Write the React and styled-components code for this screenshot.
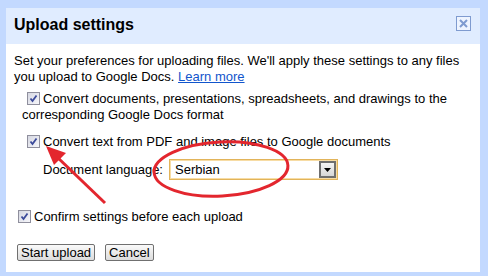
import styled, { createGlobalStyle } from "styled-components";

const Global = createGlobalStyle`
  html, body {
    margin: 0;
    padding: 0;
    background: #c3d9ff;
  }
  body {
    font-family: "Liberation Sans", Arial, sans-serif;
    font-size: 13px;
    color: #000;
  }
`;

const Page = styled.div`
  position: relative;
  width: 488px;
  height: 276px;
  padding: 8px 8px 4px 6px;
  box-sizing: border-box;
`;

const Dialog = styled.div`
  width: 474px;
  height: 264px;
  background: #fff;
  display: flex;
  flex-direction: column;
`;

const Header = styled.div`
  height: 36px;
  box-sizing: border-box;
  background: #e0ecff;
  padding: 8px 9px 0 8px;
  display: flex;
  justify-content: space-between;
  align-items: flex-start;
`;

const Title = styled.h1`
  margin: 0;
  font-size: 16px;
  line-height: 18px;
  font-weight: bold;
`;

const Close = styled.button`
  width: 15px;
  height: 15px;
  padding: 0;
  margin: 0;
  border: 1px solid #7f9bd0;
  background: #eef4ff;
  display: flex;
  align-items: center;
  justify-content: center;
  box-sizing: border-box;
`;

const Body = styled.div`
  padding: 9px 8px 0 8px;
  display: flex;
  flex-direction: column;
  line-height: 16px;
`;

const Intro = styled.p`
  margin: 0;
`;

const Link = styled.a`
  color: #1155cc;
  text-decoration: underline;
`;

const Option = styled.div`
  margin: ${(p) => p.$top}px 0 0 ${(p) => p.$indent}px;
`;

const Box = styled.span`
  display: inline-block;
  vertical-align: -2px;
  width: 13px;
  height: 13px;
  box-sizing: border-box;
  border: 1px solid #8f8f9d;
  background: linear-gradient(135deg, #d6d8e2, #f6f6fa);
  margin: 0 3px 0 ${(p) => p.$left || 0}px;
  svg {
    display: block;
  }
`;

const LangRow = styled.div`
  margin: 9px 0 0 29px;
  display: flex;
  align-items: center;
  gap: 6px;
`;

const Select = styled.div`
  width: 169px;
  height: 21px;
  box-sizing: border-box;
  border: 1px solid #e2b45a;
  box-shadow: inset 0 0 0 1px #f7dca4;
  display: flex;
  align-items: center;
  justify-content: space-between;
  padding: 0 1px 0 5px;
`;

const Caret = styled.span`
  width: 17px;
  height: 17px;
  box-sizing: border-box;
  border: 2px solid #6f6f6f;
  background: linear-gradient(#f4f4f4, #d6d6d6);
  display: flex;
  align-items: center;
  justify-content: center;
`;

const Buttons = styled.div`
  margin: 19px 0 0 3px;
  display: flex;
  gap: 10px;
`;

const Button = styled.button`
  font-family: "Liberation Sans", Arial, sans-serif;
  font-size: 13px;
  line-height: 15px;
  height: 17px;
  padding: 0 3px;
  border: 1px solid #707070;
  border-radius: 2px;
  background: linear-gradient(#fafafa, #dcdcdc);
  color: #000;
`;

const Overlay = styled.svg`
  position: absolute;
  left: 0;
  top: 0;
  pointer-events: none;
`;

function Check({ left }) {
  return (
    <Box $left={left}>
      <svg width="11" height="11" viewBox="0 0 11 11">
        <path d="M2.5 5.5 L4.5 8 L8.5 2.5" fill="none" stroke="#3b4a9a" strokeWidth="1.8" />
      </svg>
    </Box>
  );
}

export default function App() {
  return (
    <Page>
      <Global />
      <Dialog>
        <Header>
          <Title>Upload settings</Title>
          <Close aria-label="Close">
            <svg width="11" height="11" viewBox="0 0 11 11">
              <path d="M2 2 L9 9 M9 2 L2 9" stroke="#7f9bd0" strokeWidth="2" />
            </svg>
          </Close>
        </Header>
        <Body>
          <Intro>
            Set your preferences for uploading files. We'll apply these settings to any files
            you upload to Google Docs. <Link href="#">Learn more</Link>
          </Intro>
          <Option $top={6} $indent={8}>
            <Check left={5} />
            Convert documents, presentations, spreadsheets, and drawings to the
            corresponding Google Docs format
          </Option>
          <Option $top={11} $indent={8}>
            <Check left={5} />
            Convert text from PDF and image files to Google documents
          </Option>
          <LangRow>
            <span>Document language:</span>
            <Select>
              <span>Serbian</span>
              <Caret>
                <svg width="7" height="4" viewBox="0 0 7 4">
                  <path d="M0 0 H7 L3.5 4 Z" fill="#000" />
                </svg>
              </Caret>
            </Select>
          </LangRow>
          <Option $top={29} $indent={0}>
            <Check left={4} />
            Confirm settings before each upload
          </Option>
          <Buttons>
            <Button>Start upload</Button>
            <Button>Cancel</Button>
          </Buttons>
        </Body>
      </Dialog>
      <Overlay width="488" height="276" viewBox="0 0 488 276">
        <ellipse cx="221" cy="169" rx="67" ry="27" transform="rotate(-3 221 169)" fill="none" stroke="#e3262e" strokeWidth="3" />
        <line x1="105" y1="203" x2="56" y2="156" stroke="#e3262e" strokeWidth="3" />
        <polygon points="46,146 66,153 54,165" fill="#e3262e" />
      </Overlay>
    </Page>
  );
}
